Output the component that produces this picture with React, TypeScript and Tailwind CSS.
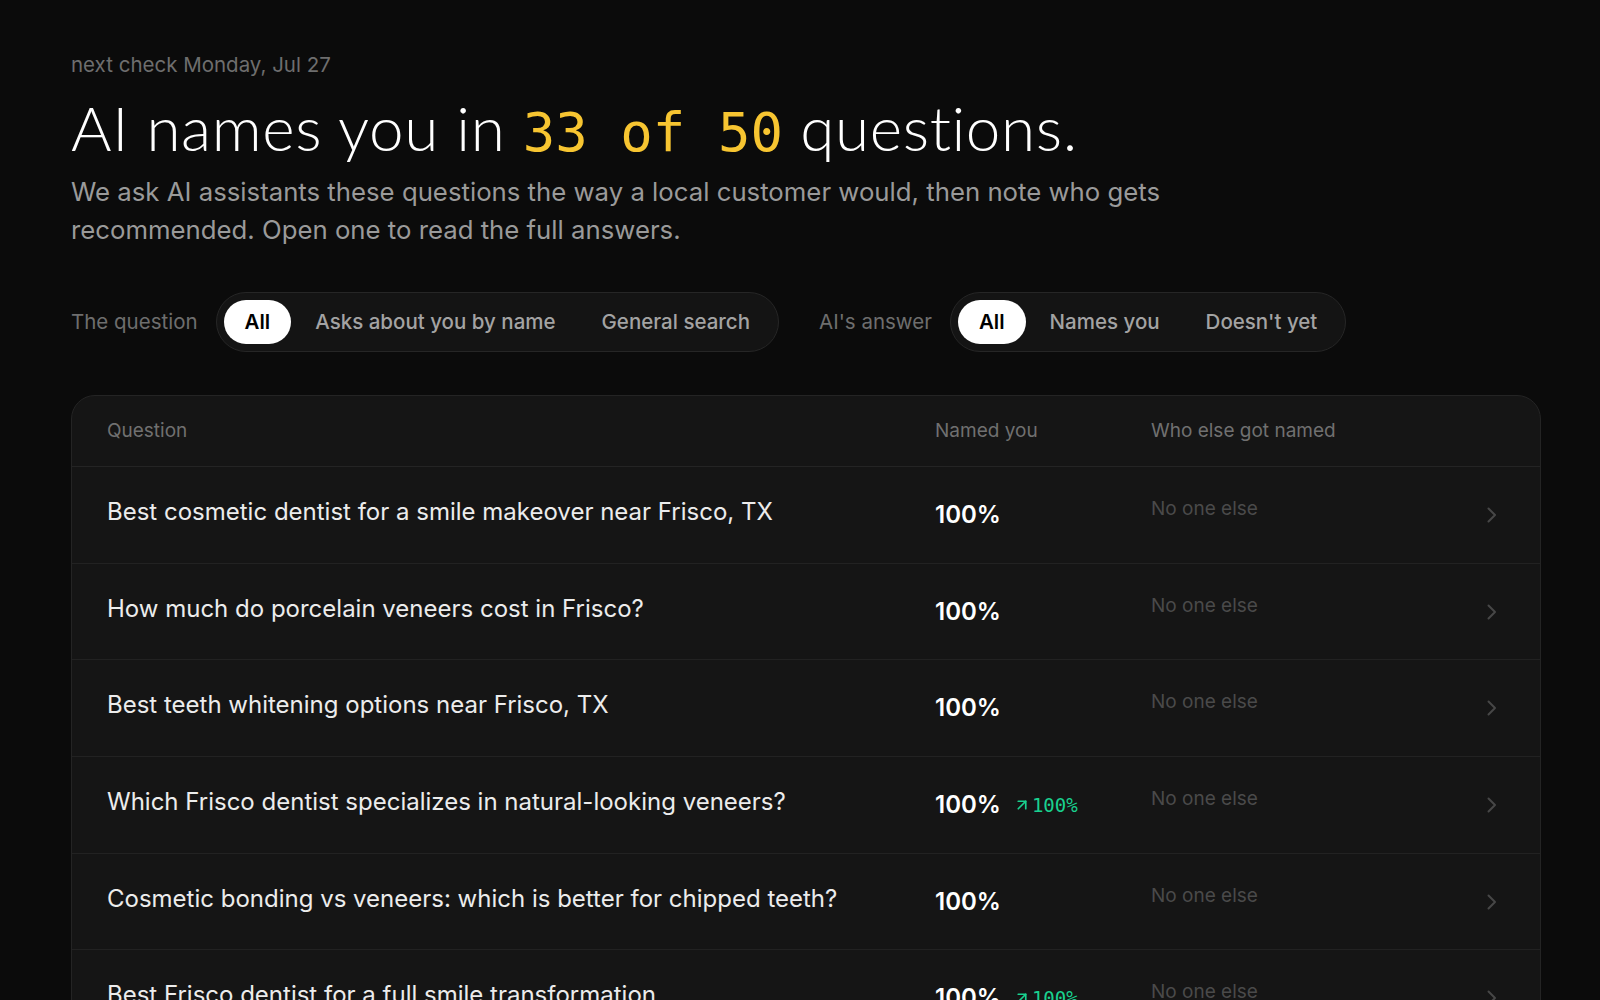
import { ArrowUpRight } from "lucide-react";

type Row = { q: string; pct: string; delta?: string; others: string };

const rows: Row[] = [
  { q: "Best cosmetic dentist for a smile makeover near Frisco, TX", pct: "100%", others: "No one else" },
  { q: "How much do porcelain veneers cost in Frisco?", pct: "100%", others: "No one else" },
  { q: "Best teeth whitening options near Frisco, TX", pct: "100%", others: "No one else" },
  { q: "Which Frisco dentist specializes in natural-looking veneers?", pct: "100%", delta: "100%", others: "No one else" },
  { q: "Cosmetic bonding vs veneers: which is better for chipped teeth?", pct: "100%", others: "No one else" },
  { q: "Best Frisco dentist for a full smile transformation", pct: "100%", delta: "100%", others: "No one else" },
];

const sans = "font-['Inter','Noto_Sans',sans-serif]";
const mono = "font-['DejaVu_Sans_Mono','Liberation_Mono',monospace]";

function Segmented({ label, options }: { label: string; options: string[] }) {
  return (
    <div className="flex items-center gap-[18px]">
      <span className="text-[20.5px] text-[#6e6e6e]">{label}</span>
      <div className="flex h-[60px] items-center gap-[2px] rounded-full border border-[#262626] bg-[#141414] pl-[7px] pr-[6px]">
        {options.map((opt, i) => (
          <button
            key={opt}
            className={
              i === 0
                ? "h-[44px] rounded-full bg-white px-[21px] text-[20.5px] font-semibold text-black"
                : "h-[44px] rounded-full px-[22px] text-[20.5px] font-medium text-[#a3a3a3]"
            }
          >
            {opt}
          </button>
        ))}
      </div>
    </div>
  );
}

function Chevron() {
  return (
    <svg width="10" height="16" viewBox="0 0 10 16" fill="none" className="mt-[10px]">
      <polyline points="1.5,1.5 8,8 1.5,14.5" stroke="#474747" strokeWidth="2" strokeLinecap="round" strokeLinejoin="round" />
    </svg>
  );
}

export default function App() {
  return (
    <div className={`min-h-screen bg-[#0b0b0b] ${sans} text-white`}>
      <div className="ml-[71px] w-[1470px] pt-[53px]">
        <p className="text-[20.5px] leading-[24px] text-[#6e6e6e]">next check Monday, Jul 27</p>

        <h1 className="mt-[14px] font-['Lato',sans-serif] text-[62px] font-light leading-[72px] tracking-[0.6px] text-white">
          AI names you in <span className={`${mono} text-[54px] font-normal tracking-normal text-[#f7c531]`}>33 of 50</span> questions.
        </h1>

        <p className="mt-[4px] max-w-[1130px] text-[25.75px] leading-[38px] text-[#9a9a9a]">
          We ask AI assistants these questions the way a local customer would, then note who gets recommended. Open one to read the full answers.
        </p>

        <div className="mt-[43px] flex items-center gap-[40px]">
          <Segmented label="The question" options={["All", "Asks about you by name", "General search"]} />
          <Segmented label="AI's answer" options={["All", "Names you", "Doesn't yet"]} />
        </div>

        <div className="mt-[43px] overflow-hidden rounded-[24px] border border-[#242424] bg-[#151515]">
          <div className="grid h-[71px] grid-cols-[828px_216px_1fr_24px] items-center border-b border-[#242424] pl-[35px] pr-[29px] text-[19px] text-[#707070]">
            <span>Question</span>
            <span>Named you</span>
            <span>Who else got named</span>
            <span />
          </div>
          {rows.map((r) => (
            <div
              key={r.q}
              className="grid h-[96.7px] grid-cols-[828px_216px_1fr_24px] items-start border-b border-[#222] pl-[35px] pr-[29px] pt-[30px]"
            >
              <span className="text-[24px] leading-[30px] text-[#ececec]">{r.q}</span>
              <div className="mt-[2px] flex items-center gap-[12px]">
                <span className="text-[24px] font-semibold leading-[32px] text-white">{r.pct}</span>
                {r.delta && (
                  <span className={`flex items-center gap-[1px] ${mono} text-[19px] text-[#19d18f]`}>
                    <ArrowUpRight size={18} strokeWidth={2.25} />
                    {r.delta}
                  </span>
                )}
              </div>
              <span className="text-[19px] leading-[24px] text-[#4a4a4a]">{r.others}</span>
              <Chevron />
            </div>
          ))}
        </div>
      </div>
    </div>
  );
}
